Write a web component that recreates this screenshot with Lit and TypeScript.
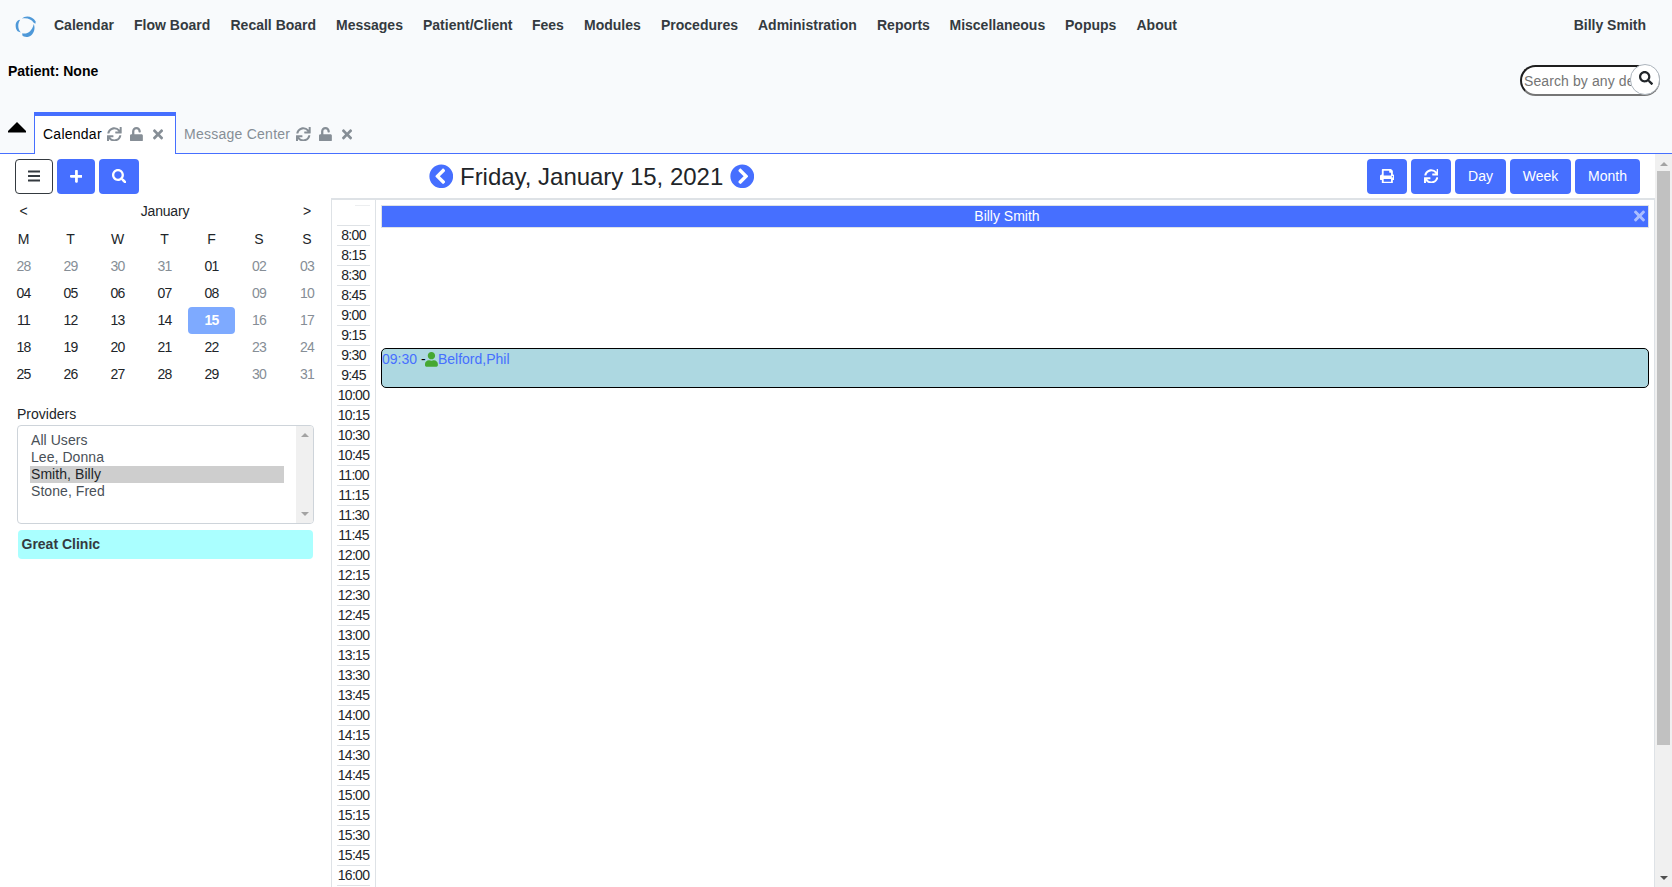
import { LitElement, html, css, svg } from "lit";
import { customElement, property } from "lit/decorators.js";

const ICONS: Record<string, [number, string]> = {
  search: [512, "M505 442.7L405.3 343c-4.5-4.5-10.6-7-17-7H372c27.6-35.3 44-79.7 44-128C416 93.1 322.9 0 208 0S0 93.1 0 208s93.1 208 208 208c48.3 0 92.7-16.4 128-44v16.3c0 6.4 2.5 12.5 7 17l99.7 99.7c9.4 9.4 24.6 9.4 33.9 0l28.3-28.3c9.4-9.4 9.4-24.6.1-34zM208 336c-70.7 0-128-57.2-128-128 0-70.7 57.2-128 128-128 70.7 0 128 57.2 128 128 0 70.7-57.2 128-128 128z"],
  sync: [512, "M440.65 12.57l4 82.77A247.16 247.16 0 0 0 255.83 8C134.73 8 33.91 94.92 12.29 209.82A12 12 0 0 0 24.09 224h49.05a12 12 0 0 0 11.67-9.26 175.91 175.91 0 0 1 317-56.94l-101.46-4.86a12 12 0 0 0-12.57 12v47.41a12 12 0 0 0 12 12H500a12 12 0 0 0 12-12V12a12 12 0 0 0-12-12h-47.37a12 12 0 0 0-11.98 12.57zM255.83 432a175.61 175.61 0 0 1-146-77.8l101.8 4.87a12 12 0 0 0 12.57-12v-47.4a12 12 0 0 0-12-12H12a12 12 0 0 0-12 12V500a12 12 0 0 0 12 12h47.35a12 12 0 0 0 12-12.6l-4.15-82.57A247.17 247.17 0 0 0 255.83 504c121.11 0 221.93-86.92 243.55-201.82a12 12 0 0 0-11.8-14.18h-49.05a12 12 0 0 0-11.67 9.26A175.86 175.86 0 0 1 255.83 432z"],
  unlock: [448, "M400 256H152V152.9c0-39.6 31.7-72.5 71.3-72.9 40-.4 72.7 32.1 72.7 72v16c0 13.3 10.7 24 24 24h32c13.3 0 24-10.7 24-24v-16C376 68 307.5-.3 223.5 0 139.5.3 72 69.5 72 153.5V256H48c-26.5 0-48 21.5-48 48v160c0 26.5 21.5 48 48 48h352c26.5 0 48-21.5 48-48V304c0-26.5-21.5-48-48-48z"],
  times: [352, "M242.72 256l100.07-100.07c12.28-12.28 12.28-32.19 0-44.48l-22.24-22.24c-12.28-12.28-32.19-12.28-44.48 0L176 189.28 75.93 89.21c-12.28-12.28-32.19-12.28-44.48 0L9.21 111.45c-12.28 12.28-12.28 32.19 0 44.48L109.28 256 9.21 356.07c-12.28 12.28-12.28 32.19 0 44.48l22.24 22.24c12.28 12.28 32.2 12.28 44.48 0L176 322.72l100.07 100.07c12.28 12.28 32.2 12.28 44.48 0l22.24-22.24c12.28-12.28 12.28-32.19 0-44.48L242.72 256z"],
  user: [448, "M224 256c70.7 0 128-57.3 128-128S294.7 0 224 0 96 57.3 96 128s57.3 128 128 128zm89.6 32h-16.7c-22.2 10.2-46.9 16-72.9 16s-50.6-5.8-72.9-16h-16.7C60.2 288 0 348.2 0 422.4V464c0 26.5 21.5 48 48 48h352c26.5 0 48-21.5 48-48v-41.6c0-74.2-60.2-134.4-134.4-134.4z"],
  print: [512, "M448 192V77.25c0-8.49-3.37-16.62-9.37-22.63L393.37 9.37c-6-6-14.14-9.37-22.63-9.37H96C78.33 0 64 14.33 64 32v160c-35.35 0-64 28.65-64 64v112c0 8.84 7.16 16 16 16h48v96c0 17.67 14.33 32 32 32h320c17.67 0 32-14.33 32-32v-96h48c8.84 0 16-7.16 16-16V256c0-35.35-28.65-64-64-64zm-64 256H128v-96h256v96zm0-224H128V64h192v48c0 8.84 7.16 16 16 16h48v96zm48 72c-13.25 0-24-10.75-24-24 0-13.26 10.75-24 24-24s24 10.74 24 24c0 13.25-10.75 24-24 24z"],
  prev: [512, "M256 504C119 504 8 393 8 256S119 8 256 8s248 111 248 248-111 248-248 248zM142.1 273l135.5 135.5c9.4 9.4 24.6 9.4 33.9 0l17-17c9.4-9.4 9.4-24.6 0-33.9L226.9 256l101.6-101.6c9.4-9.4 9.4-24.6 0-33.9l-17-17c-9.4-9.4-24.6-9.4-33.9 0L142.1 239c-9.4 9.4-9.4 24.6 0 34z"],
  next: [512, "M256 8c137 0 248 111 248 248S393 504 256 504 8 393 8 256 119 8 256 8zm113.9 231L234.4 103.5c-9.4-9.4-24.6-9.4-33.9 0l-17 17c-9.4 9.4-9.4 24.6 0 33.9L285.1 256 183.5 357.6c-9.4 9.4-9.4 24.6 0 33.9l17 17c9.4 9.4 24.6 9.4 33.9 0L369.9 273c9.4-9.4 9.4-24.6 0-34z"],
  plus: [448, "M416 208H272V64c0-17.67-14.33-32-32-32h-32c-17.67 0-32 14.33-32 32v144H32c-17.67 0-32 14.33-32 32v32c0 17.67 14.33 32 32 32h144v144c0 17.67 14.33 32 32 32h32c17.67 0 32-14.33 32-32V304h144c17.67 0 32-14.33 32-32v-32c0-17.67-14.33-32-32-32z"],
  bars: [448, "M12 56h424a12 12 0 0 1 12 12v48a12 12 0 0 1-12 12H12a12 12 0 0 1-12-12V68a12 12 0 0 1 12-12zM12 220h424a12 12 0 0 1 12 12v48a12 12 0 0 1-12 12H12a12 12 0 0 1-12-12v-48a12 12 0 0 1 12-12zM12 384h424a12 12 0 0 1 12 12v48a12 12 0 0 1-12 12H12a12 12 0 0 1-12-12v-48a12 12 0 0 1 12-12z"],
};

const icon = (name: string, size = 14.7) => {
  const [w, d] = ICONS[name];
  return html`<svg width=${(size * w) / 512} height=${size} viewBox="0 0 ${w} 512" fill="currentColor">${svg`<path d=${d}></path>`}</svg>`;
};

const MENU: [string, number][] = [
  ["Calendar", 80], ["Flow Board", 96.5], ["Recall Board", 105.5], ["Messages", 87],
  ["Patient/Client", 109], ["Fees", 52], ["Modules", 77], ["Procedures", 97],
  ["Administration", 119], ["Reports", 72.5], ["Miscellaneous", 115.5], ["Popups", 71.5], ["About", 60],
];

@customElement("app-header")
export class AppHeader extends LitElement {
  static styles = css`
    :host { display: flex; flex-direction: column; height: 154px; flex: none; background: #f8fafc; box-sizing: border-box; }
    svg { display: block; flex: none; }
    .menu { display: flex; align-items: center; height: 50px; padding: 0 26px 0 15px; font-weight: 700; color: #343a40; }
    .logo { margin: 2px 18px 0 0; }
    .item { flex: none; white-space: nowrap; }
    .name { margin-left: auto; }
    .patient { display: flex; justify-content: space-between; height: 62px; padding: 0 12px 0 8px; box-sizing: border-box; }
    .who { margin-top: 13px; font-weight: 700; color: #000; line-height: 16px; }
    .search { display: flex; width: 140px; height: 32px; margin-top: 14px; position: relative; }
    .field { box-sizing: border-box; width: 140px; height: 31px; margin-top: 1px; border: 2px solid; border-color: #1f1f1f #767676 #767676 #1f1f1f; border-radius: 16px; background: #fff; color: #757575; padding: 1px 0 0 2px; line-height: 26px; white-space: nowrap; letter-spacing: 0.1px; }
    .go { position: absolute; right: 0; top: 0; width: 30px; height: 31px; box-sizing: border-box; border: 1px solid #adb5bd; border-radius: 16px; background: #fff; color: #212529; display: flex; justify-content: center; padding: 6px 0 0 2px; }
    .tabs { display: flex; flex: 1; align-items: stretch; }
    .spacer { border-bottom: 1px solid #466fff; }
    .toggle { width: 34px; box-sizing: border-box; padding: 10px 0 0 8px; }
    .tab { display: flex; align-items: center; box-sizing: border-box; color: #868e96; letter-spacing: 0.25px; white-space: nowrap; }
    .tab span { line-height: 16px; }
    .active { width: 142px; border: 1px solid #466fff; border-top-width: 4px; border-bottom: 0; background: #fff; padding: 0 0 2px 8px; }
    .active span { color: #000; width: 59px; }
    .idle { flex: 1; padding: 3px 0 0 8px; }
    .idle span { width: 107px; }
    .sync { margin-left: 5px; } .lock { margin-left: 8.500px; } .close { margin-left: 10px; }
  `;
  tab(name: string) {
    return html`<span>${name}</span><div class="sync">${icon("sync")}</div><div class="lock">${icon("unlock")}</div><div class="close">${icon("times")}</div>`;
  }
  render() {
    return html`
      <div class="menu">
        <svg class="logo" width="21" height="21" viewBox="0 0 21 21" fill="#4e98d8">
          <path d="M7 2.600C10-.6 17.500-.2 20.700 5.600l-.3 2.200-1.700-1C16.500 3.200 12 1.600 7 2.600z"></path>
          <path d="M5.200 3.800C.2 4-.7 11.500 2.600 15.200l3.200 1.200C2.700 13 2.400 8 5.200 3.800z"></path>
          <path d="M7.300 17.300c5 1.200 9.700-2 11.500-9.300 2 5-.3 11.500-5.300 12.700-2.600.6-5.300 0-6.200-1.400z"></path>
        </svg>
        ${MENU.map(([t, w]) => html`<div class="item" style="width:${w}px">${t}</div>`)}
        <div class="name">Billy Smith</div>
      </div>
      <div class="patient">
        <div class="who">Patient: None</div>
        <div class="search"><div class="field">Search by any de</div><div class="go">${icon("search", 14)}</div></div>
      </div>
      <div class="tabs">
        <div class="toggle spacer"><svg width="18" height="11" viewBox="0 0 18 11"><path d="M9 0L18 9v1.500H0V9z"></path></svg></div>
        <div class="tab active">${this.tab("Calendar")}</div>
        <div class="tab idle spacer">${this.tab("Message Center")}</div>
      </div>`;
  }
}

const WEEKS = [
  ["28", "29", "30", "31", "01", "02", "03"],
  ["04", "05", "06", "07", "08", "09", "10"],
  ["11", "12", "13", "14", "15", "16", "17"],
  ["18", "19", "20", "21", "22", "23", "24"],
  ["25", "26", "27", "28", "29", "30", "31"],
];

@customElement("side-panel")
export class SidePanel extends LitElement {
  static styles = css`
    :host { display: block; width: 331px; flex: none; color: #212529; }
    .month { display: grid; grid-template-columns: repeat(5, 47px) 48px 48px; grid-template-rows: 28px 28px; grid-auto-rows: 27px; margin-top: -1px; text-align: center; }
    .month div { display: flex; align-items: center; justify-content: center; }
    .month .digits { letter-spacing: -0.7px; padding-bottom: 1px; box-sizing: border-box; }
    .month .title { grid-column: 2 / 7; letter-spacing: -0.2px; }
    .muted { color: #868e96; }
    .picked { background: #7eaaff; color: #fff; border-radius: 4px; font-weight: 700; }
    .label { margin: 18px 0 3px 17px; line-height: 16px; }
    .list { display: flex; justify-content: space-between; box-sizing: border-box; width: 297px; height: 99px; margin-left: 17px; border: 1px solid #ced4da; border-radius: 4px; overflow: hidden; background: #fff; color: #495057; }
    .options { width: 254px; padding: 6px 0 0 12px; }
    .option { height: 17px; line-height: 17px; padding-left: 1px; letter-spacing: 0.06px; }
    .chosen { background: #cecece; color: #212529; }
    .bar { width: 17px; background: #f0f0f0; display: flex; flex-direction: column; justify-content: space-between; align-items: center; padding: 7px 0; box-sizing: border-box; }
    svg { display: block; }
    .clinic { box-sizing: border-box; width: 295px; height: 29px; margin: 6px 0 0 18px; padding-left: 3.500px; border-radius: 4px; background: #aff; font-weight: 700; line-height: 28px; color: #343a40; }
  `;
  render() {
    return html`
      <div class="month">
        <div>&lt;</div><div class="title">January</div><div>&gt;</div>
        ${["M", "T", "W", "T", "F", "S", "S"].map((d) => html`<div>${d}</div>`)}
        ${WEEKS.map((week, r) => week.map((d, c) => html`<div class="digits ${r === 2 && c === 4 ? "picked" : c > 4 || (r === 0 && c < 4) ? "muted" : ""}">${d}</div>`))}
      </div>
      <div class="label">Providers</div>
      <div class="list">
        <div class="options">
          ${["All Users", "Lee, Donna", "Smith, Billy", "Stone, Fred"].map((n) => html`<div class="option ${n === "Smith, Billy" ? "chosen" : ""}">${n}</div>`)}
        </div>
        <div class="bar">
          <svg width="8" height="4" fill="#a3a3a3"><path d="M4 0l4 4H0z"></path></svg>
          <svg width="8" height="4" fill="#a3a3a3"><path d="M0 0h8L4 4z"></path></svg>
        </div>
      </div>
      <div class="clinic">Great Clinic</div>`;
  }
}

@customElement("day-schedule")
export class DaySchedule extends LitElement {
  @property({ type: Number }) start = 8;
  static styles = css`
    :host { display: flex; flex: 1; box-sizing: border-box; border: 1px solid #dee2e6; border-top-width: 2px; border-bottom: 0; overflow: hidden; background: #fff; }
    svg { display: block; flex: none; }
    .times { width: 44px; flex: none; box-sizing: border-box; padding: 5px 5px 0 5px; border-right: 1px solid #dee2e6; }
    .blank { height: 19px; border-top: 1px solid #eceef0; margin-left: 18px; }
    .time { height: 20px; box-sizing: border-box; border-top: 1px solid #dee2e6; text-align: center; line-height: 19px; letter-spacing: -0.7px; white-space: nowrap; color: #212529; }
    .lane { flex: 1; padding: 5px 5px 0 5px; }
    .provider { display: flex; align-items: center; height: 21px; border: 1px solid #dee2e6; background: #466fff; color: #fff; padding-right: 3px; }
    .provider span { flex: 1; text-align: center; line-height: 19px; padding: 0 2px 0 0; }
    .provider i { display: block; opacity: .55; padding-bottom: 1px; }
    .event { display: flex; box-sizing: border-box; height: 40px; margin-top: 120px; border: 1px solid #000; border-radius: 5px; background: #add8e1; color: #466fff; line-height: 16px; padding-top: 2px; }
    .dash { color: #000; margin-left: 4px; width: 4px; }
    .person { color: #46a832; margin-top: 1px; }
  `;
  render() {
    const slots = Array.from({ length: 33 }, (_, i) => `${this.start + Math.floor(i / 4)}:${["00", "15", "30", "45"][i % 4]}`);
    return html`
      <div class="times"><div class="blank"></div>${slots.map((s) => html`<div class="time">${s}</div>`)}<div class="time"></div></div>
      <div class="lane">
        <div class="provider"><span>Billy Smith</span><i>${icon("times", 16)}</i></div>
        <div class="event"><span>09:30</span><span class="dash">-</span><div class="person">${icon("user")}</div><span>Belford,Phil</span></div>
      </div>`;
  }
}

@customElement("app-root")
export class AppRoot extends LitElement {
  static styles = css`
    :host { display: flex; flex-direction: column; width: 1672px; height: 887px; overflow: hidden; background: #fff; font: 14px "Liberation Sans", Arial, sans-serif; }
    svg { display: block; }
    .body { display: flex; flex: 1; min-height: 0; }
    .page { flex: 1; min-width: 0; display: flex; flex-direction: column; }
    .toolbar { display: flex; height: 44px; flex: none; box-sizing: border-box; padding: 5px 15px 0; gap: 4px; }
    .btn { display: flex; align-items: center; justify-content: center; box-sizing: border-box; width: 40px; height: 35px; border-radius: 4px; background: #466fff; color: #fff; padding-bottom: 1px; }
    .small { width: 38px; }
    .outline { background: #fff; border: 1px solid #343a40; color: #343a40; padding-bottom: 2px; }
    .day { width: 51px; } .week { width: 61px; } .mon { width: 65px; }
    .date { display: flex; align-items: center; gap: 7px; margin: 0 auto 0 285.5px; height: 34px; color: #466fff; }
    .date span { color: #212529; font-size: 24px; letter-spacing: -0.02px; width: 262.5px; white-space: nowrap; padding-top: 1px; }
    .columns { display: flex; flex: 1; min-height: 0; }
    .scroll { width: 17px; flex: none; box-sizing: border-box; background: #f0f0f0; display: flex; flex-direction: column; align-items: center; padding: 8px 0 7px; }
    .thumb { width: 13px; height: 574px; margin: 5px 0 auto; background: #c1c1c1; }
  `;
  render() {
    return html`
      <app-header></app-header>
      <div class="body">
        <div class="page">
          <div class="toolbar">
            <div class="btn small outline">${icon("bars", 14)}</div>
            <div class="btn small">${icon("plus")}</div>
            <div class="btn">${icon("search")}</div>
            <div class="date">${icon("prev", 24.5)}<span>Friday, January 15, 2021</span>${icon("next", 24.5)}</div>
            <div class="btn">${icon("print")}</div>
            <div class="btn">${icon("sync")}</div>
            <div class="btn day">Day</div>
            <div class="btn week">Week</div>
            <div class="btn mon">Month</div>
          </div>
          <div class="columns">
            <side-panel></side-panel>
            <day-schedule></day-schedule>
          </div>
        </div>
        <div class="scroll">
          <svg width="8" height="4" fill="#a3a3a3"><path d="M4 0l4 4H0z"></path></svg>
          <div class="thumb"></div>
          <svg width="8" height="4" fill="#505050"><path d="M0 0h8L4 4z"></path></svg>
        </div>
      </div>`;
  }
}
